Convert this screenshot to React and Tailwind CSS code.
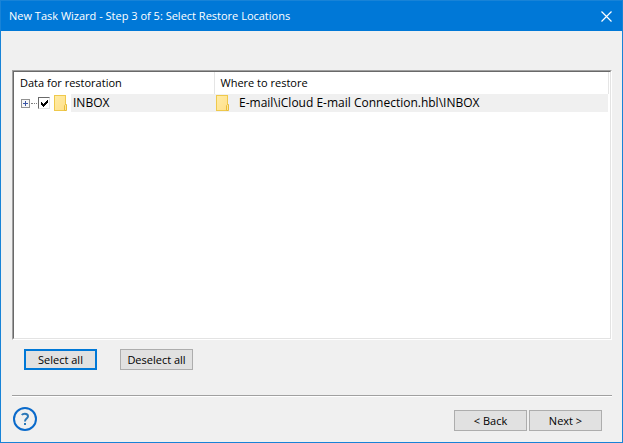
import React, { useState } from 'react';

const FolderIcon = () => (
  <svg width="14" height="16" viewBox="0 0 14 16" className="shrink-0" aria-hidden="true">
    <defs>
      <linearGradient id="folder" x1="0" y1="0" x2="1" y2="1">
        <stop offset="0" stopColor="#ffeca6" />
        <stop offset="1" stopColor="#ffe08a" />
      </linearGradient>
    </defs>
    <rect x="0.5" y="0.5" width="11" height="15" fill="url(#folder)" stroke="#efc94c" />
    <path d="M10.5 15.5v-5l1-1h1v6z" fill="#ffe699" stroke="#e8bd3a" />
  </svg>
);

const ExpandIcon = () => (
  <svg width="9" height="9" viewBox="0 0 9 9" shapeRendering="crispEdges" aria-hidden="true">
    <rect x="0.5" y="0.5" width="8" height="8" fill="#f7f7f7" stroke="#919191" />
    <path d="M2 4.5h5M4.5 2v5" stroke="#3b56a5" />
  </svg>
);

const CheckMark = () => (
  <svg width="12" height="12" viewBox="0 0 12 12" className="pointer-events-none col-start-1 row-start-1" shapeRendering="crispEdges" aria-hidden="true">
    <path d="M3 5h1v1h1v1h1v-1h1v-1h1v-1h1v-1h1v3h-1v1h-1v1h-1v1h-1v1h-1v-1h-1v-1h-1z" fill="#000" />
  </svg>
);

const HelpIcon = () => (
  <svg width="24" height="24" viewBox="0 0 24 24" fill="none" aria-hidden="true">
    <circle cx="12" cy="12" r="11" stroke="#0a6acb" strokeWidth="2" />
    <path d="M8.8 8C9.4 7.2 10.4 6.8 11.8 6.8c2 0 3.2 1 3.2 2.5 0 2.3-3 2.4-3 5.2" stroke="#2b78b8" strokeWidth="2" />
    <rect x="11" y="16" width="2" height="2" fill="#2b78b8" />
  </svg>
);

const WizardButton = ({ children, primary, onClick }) => (
  <button
    type="button"
    onClick={onClick}
    className={`flex h-[21px] w-[73px] items-center justify-center whitespace-nowrap bg-[#e1e1e1] text-[11px] leading-4 ${
      primary ? 'border-2 border-[#0078d7]' : 'border border-[#adadad]'
    }`}
  >
    {children}
  </button>
);

const App = () => {
  const [checked, setChecked] = useState(true);

  return (
    <div className="flex min-h-screen flex-col border border-[#1883d7] bg-[#f0f0f0] font-['Open_Sans',sans-serif] text-[12px] leading-4 text-black">
      {/* Title bar */}
      <header className="flex h-[30px] items-center justify-between bg-[#0078d7] pl-2 pr-[10px] text-white">
        <h1 className="text-[11px]">New Task Wizard - Step 3 of 5: Select Restore Locations</h1>
        <button type="button" aria-label="Close">
          <svg width="11" height="11" viewBox="0 0 11 11" stroke="#fff" strokeWidth="1.2" aria-hidden="true">
            <path d="M0.5 0.5l10 10M10.5 0.5l-10 10" />
          </svg>
        </button>
      </header>

      <main className="flex flex-1 flex-col pl-[11px] pr-[10px] pt-[39px]">
        {/* Sunken list view */}
        <div className="flex flex-1 flex-col border border-b-white border-l-[#a0a0a0] border-r-white border-t-[#a0a0a0]">
          <div className="flex-1 border border-b-[#e3e3e3] border-l-[#696969] border-r-[#e3e3e3] border-t-[#696969] bg-white pr-px">
            <table className="w-full table-fixed">
              <thead>
                <tr className="h-[22px] text-left text-[11px]">
                  <th className="w-[200px] border-r border-[#e5e5e5] pl-[6px] font-normal">Data for restoration</th>
                  <th className="border-r border-[#e5e5e5] pl-[6px] font-normal">Where to restore</th>
                </tr>
              </thead>
              <tbody>
                <tr className="h-[18px]">
                  <td>
                    <div className="flex h-[18px] items-center pl-[7px]">
                      <button type="button" aria-label="Expand">
                        <ExpandIcon />
                      </button>
                      <span className="ml-px mr-px w-[6px] border-t border-dotted border-[#808080]" />
                      <span className="grid">
                        <input
                          id="inbox"
                          type="checkbox"
                          checked={checked}
                          onChange={(e) => setChecked(e.target.checked)}
                          className="col-start-1 row-start-1 size-3 appearance-none border border-b-[#e3e3e3] border-l-[#696969] border-r-[#e3e3e3] border-t-[#696969] bg-white"
                        />
                        {checked && <CheckMark />}
                      </span>
                      <span className="ml-1 mr-[3px]">
                        <FolderIcon />
                      </span>
                      <label htmlFor="inbox" className="flex-1 bg-[#f0f0f0] pl-[2px] leading-[18px]">
                        INBOX
                      </label>
                    </div>
                  </td>
                  <td className="border-r border-white bg-[#f0f0f0]">
                    <div className="flex items-center gap-[9px] pl-[2px]">
                      <FolderIcon />
                      <span>E-mail\iCloud E-mail Connection.hbl\INBOX</span>
                    </div>
                  </td>
                </tr>
              </tbody>
            </table>
          </div>
        </div>

        <div className="mt-[9px] flex gap-[23px] pl-3">
          <WizardButton primary onClick={() => setChecked(true)}>Select all</WizardButton>
          <WizardButton onClick={() => setChecked(false)}>Deselect all</WizardButton>
        </div>

        <hr className="mt-[25px] h-[2px] border-b border-t border-b-white border-t-[#a0a0a0]" />
      </main>

      {/* Footer */}
      <footer className="flex items-end justify-between pb-[11px] pl-3 pr-5 pt-[10px]">
        <button type="button" aria-label="Help">
          <HelpIcon />
        </button>
        <div className="flex gap-[2px]">
          <WizardButton>&lt; Back</WizardButton>
          <WizardButton>Next &gt;</WizardButton>
        </div>
      </footer>
    </div>
  );
};

export default App;
